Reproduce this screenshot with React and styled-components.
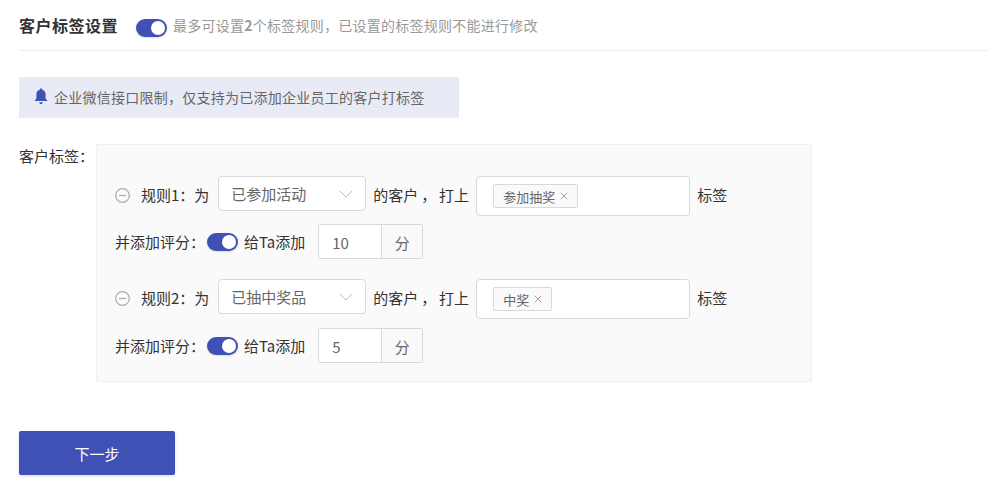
import React from "react";
import styled, { createGlobalStyle } from "styled-components";
import { ChevronDown, X } from "lucide-react";

const GlobalStyle = createGlobalStyle`
  html, body {
    margin: 0;
    background: #fff;
    font-family: "Noto Sans CJK SC", "Noto Sans", sans-serif;
    font-size: 15px;
    color: #333;
  }
`;

// full-width punctuation
const COLON = "\uFF1A";
const COMMA = "\uFF0C";

const rules = [
  { name: "规则1", activity: "已参加活动", tag: "参加抽奖", score: "10" },
  { name: "规则2", activity: "已抽中奖品", tag: "中奖", score: "5" },
];

const BellIcon = () => (
  <BellSvg viewBox="0 0 14 17">
    <path
      d="M7 .5c.8 0 1.3.5 1.3 1.3 2.3.6 3.3 2.6 3.3 5v3.7l1.9 2.5H.5l1.9-2.5V6.8c0-2.4 1-4.4 3.3-5C5.7 1 6.2.5 7 .5zM5.3 14.2h3.4c0 1.1-.8 2-1.7 2s-1.7-.9-1.7-2z"
      fill="#3f51b5"
    />
  </BellSvg>
);

const MinusIcon = () => (
  <MinusSvg viewBox="0 0 15 15">
    <circle cx="7.5" cy="7.5" r="6.8" fill="none" stroke="#aaa" strokeWidth="1.2" />
    <line x1="4" y1="7.5" x2="11" y2="7.5" stroke="#aaa" strokeWidth="1.2" />
  </MinusSvg>
);

const Rule = ({ rule }) => (
  <RuleBlock>
    <RuleRow>
      <MinusIcon />
      <span>
        {rule.name}
        {COLON}为
      </span>
      <Select>
        <span>{rule.activity}</span>
        <ChevronDown size={24} strokeWidth={0.8} color="#aaa" />
      </Select>
      <CustomerText>的客户 {COMMA} 打上</CustomerText>
      <TagBox>
        <Tag>
          {rule.tag}
          <X size={12} strokeWidth={1.5} color="#888" />
        </Tag>
      </TagBox>
      <span>标签</span>
    </RuleRow>
    <ScoreRow>
      <ScoreCaption>并添加评分{COLON}</ScoreCaption>
      <Toggle />
      <ScoreLabel>给Ta添加</ScoreLabel>
      <ScoreInput>
        <ScoreValue>{rule.score}</ScoreValue>
        <ScoreUnit>分</ScoreUnit>
      </ScoreInput>
    </ScoreRow>
  </RuleBlock>
);

const App = () => (
  <Page>
    <GlobalStyle />
    <Header>
      <Title>客户标签设置</Title>
      <HeaderToggle />
      <Hint>
        最多可设置<b>2</b>个标签规则{COMMA}已设置的标签规则不能进行修改
      </Hint>
    </Header>

    <Notice>
      <BellIcon />
      <span>企业微信接口限制{COMMA}仅支持为已添加企业员工的客户打标签</span>
    </Notice>

    <FormRow>
      <FormLabel>客户标签{COLON}</FormLabel>
      <Panel>
        {rules.map((rule) => (
          <Rule key={rule.name} rule={rule} />
        ))}
      </Panel>
    </FormRow>

    <NextButton>下一步</NextButton>
  </Page>
);

const Page = styled.div`
  width: 988px;
  height: 496px;
  overflow: hidden;
  padding-left: 19px;
  box-sizing: border-box;
`;

const Header = styled.div`
  display: flex;
  align-items: center;
  height: 51px;
  padding-bottom: 1px;
  box-sizing: border-box;
  border-bottom: 1px solid #ebedf3;
`;

const Title = styled.div`
  font-size: 16px;
  font-weight: 700;
  letter-spacing: 0.5px;
  margin-right: 18px;
`;

const Toggle = styled.span`
  position: relative;
  display: inline-block;
  flex: none;
  width: 31px;
  height: 18px;
  border-radius: 9px;
  background: #3f51b5;
  box-shadow: 0 1px 2px rgba(0, 0, 0, 0.12);

  &::after {
    content: "";
    position: absolute;
    top: 2px;
    right: 2px;
    width: 14px;
    height: 14px;
    border-radius: 50%;
    background: #fff;
  }
`;

const HeaderToggle = styled(Toggle)`
  margin-top: 6px;
`;

const Hint = styled.div`
  margin-left: 6px;
  font-size: 14px;
  color: #999;
  letter-spacing: 0.25px;

  b {
    font-weight: 700;
  }
`;

const Notice = styled.div`
  display: flex;
  align-items: center;
  gap: 6px;
  width: 440px;
  height: 41px;
  margin-top: 26px;
  padding: 0 0 1px 15px;
  box-sizing: border-box;
  background: #e8ebf5;
  font-size: 14px;
  letter-spacing: 0.25px;
  color: #666;
`;

const BellSvg = styled.svg`
  width: 14px;
  height: 17px;
  margin-bottom: 1px;
  flex: none;
`;

const FormRow = styled.div`
  display: flex;
  align-items: flex-start;
  margin-top: 26px;
`;

const FormLabel = styled.div`
  width: 77px;
  flex: none;
  line-height: 24px;
`;

const Panel = styled.div`
  width: 716px;
  height: 238px;
  padding: 31px 0 0 18px;
  box-sizing: border-box;
  background: #fafafa;
  border: 1px solid #f0f0f0;
  border-radius: 2px;
`;

const RuleRow = styled.div`
  display: flex;
  align-items: flex-start;
  gap: 7px;
  line-height: 37px;
`;

const ScoreRow = styled.div`
  display: flex;
  align-items: center;
  height: 35px;
  margin-top: 8px;
`;

const RuleBlock = styled.div`
  & + & {
    margin-top: 20px;

    ${ScoreRow} {
      margin-top: 9px;
    }
  }
`;

const MinusSvg = styled.svg`
  width: 15px;
  height: 15px;
  margin: 12px 4px 0 0;
  flex: none;
`;

const Select = styled.div`
  display: flex;
  align-items: center;
  justify-content: space-between;
  width: 148px;
  height: 35px;
  margin-left: 2px;
  padding: 0 7px 0 12px;
  box-sizing: border-box;
  background: #fff;
  border: 1px solid #d9d9d9;
  border-radius: 4px;
  color: #666;
`;

const CustomerText = styled.span`
  word-spacing: -0.5px;
`;

const TagBox = styled.div`
  display: flex;
  align-items: center;
  width: 214px;
  height: 40px;
  padding-left: 16px;
  box-sizing: border-box;
  background: #fff;
  border: 1px solid #d9d9d9;
  border-radius: 4px;
`;

const Tag = styled.span`
  display: inline-flex;
  align-items: center;
  gap: 3px;
  height: 24px;
  padding: 0 7px 0 9px;
  box-sizing: border-box;
  background: #fafafa;
  border: 1px solid #d9d9d9;
  border-radius: 2px;
  font-size: 13px;
  color: #666;
`;

const ScoreCaption = styled.span`
  margin-right: 2px;
`;

const ScoreLabel = styled.span`
  margin: 0 13px 0 6px;
`;

const ScoreInput = styled.div`
  display: flex;
  height: 35px;
  box-sizing: border-box;
  border: 1px solid #d9d9d9;
  border-radius: 2px;
  overflow: hidden;
`;

const ScoreValue = styled.div`
  width: 62px;
  padding-left: 13px;
  box-sizing: border-box;
  background: #fff;
  color: #666;
  line-height: 35px;
`;

const ScoreUnit = styled.div`
  width: 40px;
  text-align: center;
  border-left: 1px solid #d9d9d9;
  color: #666;
  line-height: 35px;
`;

const NextButton = styled.button`
  display: block;
  width: 156px;
  height: 44px;
  margin-top: 49px;
  border: 0;
  border-radius: 2px;
  background: #3f51b5;
  box-shadow: 0 1px 3px rgba(63, 81, 181, 0.2);
  color: #fff;
  font-family: inherit;
  font-size: 15px;
`;

export default App;
